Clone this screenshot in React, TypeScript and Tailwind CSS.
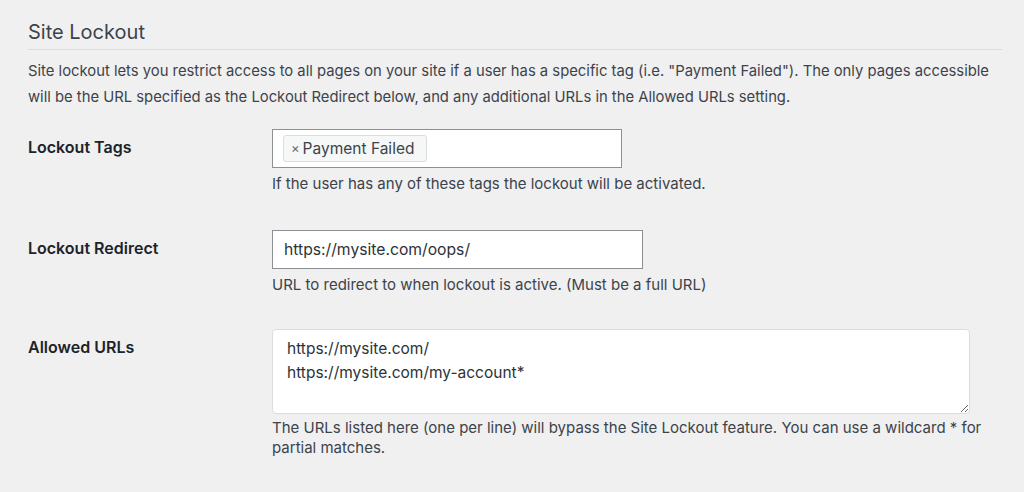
import React from "react";

const font = { fontFamily: "Inter, 'Noto Sans', sans-serif" };

const Row = ({ label, children }: { label: string; children: React.ReactNode }) => (
  <div className="flex items-start">
    <div className="w-[244px] shrink-0 pt-[8px] text-[16px] leading-[20px] font-semibold text-[#1d2327]">
      {label}
    </div>
    <div className="flex-1">{children}</div>
  </div>
);

export default function App() {
  return (
    <div
      className="w-full h-[492px] bg-[#f0f0f1] pl-[28px] pr-[22px] pt-[19px] text-[#3c434a] overflow-hidden"
      style={font}
    >
      {/* heading */}
      <h2 className="text-[20px] leading-[26px] text-[#3c434a] pb-[4px] border-b border-[#dcdcde]">
        Site Lockout
      </h2>
      <p className="mt-[8px] -mr-[8px] text-[14.8px] leading-[26px] text-[#3c434a]">
        Site lockout lets you restrict access to all pages on your site if a user has a specific tag (i.e.
        "Payment Failed"). The only pages accessible will be the URL specified as the Lockout Redirect below,
        and any additional URLs in the Allowed URLs setting.
      </p>

      <div className="mt-[19px] flex flex-col">
        <Row label="Lockout Tags">
          <div className="w-[350px] h-[39px] bg-white border border-[#8c8f94] flex items-center px-[10px]">
            <div className="h-[27px] flex items-center gap-[3px] pl-[7px] pr-[12px] bg-[#f6f7f7] border border-[#dcdcde] rounded-[3px] text-[15.5px] text-[#3c434a]">
              <span className="text-[13px] text-[#646970]">×</span>
              <span>Payment Failed</span>
            </div>
          </div>
          <p className="mt-[5px] text-[15px] leading-[22px] text-[#3c434a]">
            If the user has any of these tags the lockout will be activated.
          </p>
        </Row>

        <div className="h-[35px]" />

        <Row label="Lockout Redirect">
          <div className="w-[371px] h-[39px] bg-white border border-[#8c8f94] flex items-center px-[11px] text-[15.7px] text-[#2c3338]">
            https://mysite.com/oops/
          </div>
          <p className="mt-[5px] text-[15px] leading-[22px] text-[#3c434a]">
            URL to redirect to when lockout is active. (Must be a full URL)
          </p>
        </Row>

        <div className="h-[33px]" />

        <Row label="Allowed URLs">
          <textarea
            readOnly
            defaultValue={"https://mysite.com/\nhttps://mysite.com/my-account*"}
            className="block w-[698px] h-[85px] bg-white border border-[#dcdcde] rounded-[4px] px-[14px] pt-[7px] text-[15.5px] leading-[24px] text-[#2c3338] outline-none resize"
            style={font}
          />
          <p className="mt-[4px] w-[712px] text-[15px] leading-[20px] text-[#3c434a]">
            The URLs listed here (one per line) will bypass the Site Lockout feature. You can use a wildcard * for
            partial matches.
          </p>
        </Row>
      </div>
    </div>
  );
}
